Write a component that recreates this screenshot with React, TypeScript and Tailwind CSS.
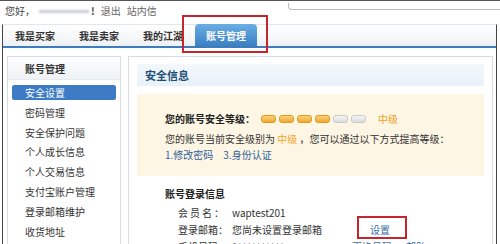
import React from 'react';

const sideItems = ['安全设置', '密码管理', '安全保护问题', '个人成长信息', '个人交易信息', '支付宝账户管理', '登录邮箱维护', '收货地址'];

const Pill = ({ on }: { on: boolean }) => (
    <span
        className={
            on
                ? 'inline-block w-[15px] h-[8px] rounded-[3px] border border-[#e09a1c] bg-gradient-to-b from-[#fbd27a] to-[#f0a72a]'
                : 'inline-block w-[15px] h-[8px] rounded-[3px] border border-[#c9c9c9] bg-gradient-to-b from-[#f6f6f6] to-[#dcdcdc]'
        }
    />
);

const App: React.FC = () => {
    return (
        <div className="relative w-[500px] h-[244px] overflow-hidden bg-white text-[#333] font-['Noto_Sans_CJK_SC',sans-serif] border-t border-[#555]">
            {/* greeting row */}
            <div className="h-[23px] flex items-start">
                <div className="shrink-0 whitespace-nowrap flex items-center gap-[4px] pl-[5px] pt-[3px] text-[10px] leading-[14px] text-[#444]">
                    <span>您好，</span>
                    <span className="inline-block w-[50px] h-[3px] bg-[#c8ccd2] blur-[1px]" />
                    <span className="font-bold -ml-[2px]">!</span>
                    <span className="ml-[2px] text-[#666]">退出</span>
                    <span className="ml-[2px] text-[#666]">站内信</span>
                </div>
                <div className="ml-[131px] mt-[2px] w-[222px] h-[7px] shrink-0 border-l border-b border-[#bbb] rounded-bl-[4px]" />
            </div>

            {/* frame */}
            <div className="ml-[2px] w-[495px] h-[221px] border-l border-r border-[#444] border-t border-t-[#e3e6ea]">
                {/* tabs */}
                <div className="h-[21px] flex items-end pl-[12px] bg-gradient-to-b from-white to-[#eef1f4]">
                    <div className="h-full flex items-center whitespace-nowrap text-[10px] font-bold text-[#333] gap-[24px]">
                        <span>我是买家</span>
                        <span>我是卖家</span>
                        <span>我的江湖</span>
                    </div>
                    <div className="ml-[12px] w-[62px] h-[22px] rounded-t-[4px] bg-gradient-to-b from-[#6aaee2] to-[#3a80c4] flex items-center justify-center text-[10px] font-bold text-white">
                        账号管理
                    </div>
                </div>
                <div className="h-[2px] bg-[#3d7dbd]" />

                {/* body */}
                <div className="flex gap-[7px] pt-[8px] pl-[4px]">
                    {/* sidebar */}
                    <div className="w-[114px] h-[200px] border border-[#d6dce2]">
                        <div className="h-[23px] flex items-center pl-[17px] text-[10px] font-bold text-[#333] bg-gradient-to-b from-white to-[#eef2f5] border-b border-[#e6eaee]">
                            账号管理
                        </div>
                        <div className="pt-[5px] px-[4px] flex flex-col">
                            {sideItems.map((t, i) => (
                                <div
                                    key={t}
                                    className={
                                        i === 0
                                            ? 'h-[15px] mb-[4.8px] flex items-center pl-[13px] text-[10px] text-white bg-[#3d7cc4] rounded-[2px]'
                                            : 'h-[15px] mb-[4.8px] flex items-center pl-[13px] text-[10px] text-[#333]'
                                    }
                                >
                                    {t}
                                </div>
                            ))}
                        </div>
                    </div>

                    {/* main */}
                    <div className="w-[365px] h-[200px] border border-[#d6dce2] px-[8px] pt-[7px]">
                        <div className="h-[22px] flex items-center pl-[8px] text-[11px] font-semibold text-[#1d4f76] bg-gradient-to-b from-[#f4f8fc] to-[#e9f1f9]">
                            安全信息
                        </div>

                        <div className="mt-[8px] h-[82px] bg-[#fdf6e4] pl-[28px] pt-[18px] text-[10px] leading-[14px]">
                            <div className="flex items-center">
                                <span className="font-bold text-[#222]">您的账号安全等级：</span>
                                <div className="ml-[6px] flex gap-[3px]">
                                    <Pill on />
                                    <Pill on />
                                    <Pill on />
                                    <Pill on />
                                    <Pill on={false} />
                                    <Pill on={false} />
                                </div>
                                <span className="ml-[12px] text-[#f0a21e]">中级</span>
                            </div>
                            <div className="mt-[6px] text-[#333]">
                                您的账号当前安全级别为 <span className="text-[#f0a21e]">中级</span> ，您可以通过以下方式提高等级：
                            </div>
                            <div className="mt-[2px] flex gap-[10px] text-[#2f5f9a]">
                                <span>1.修改密码</span>
                                <span>3.身份认证</span>
                            </div>
                        </div>

                        <div className="pl-[28px] pt-[11px] text-[10px] leading-[14px]">
                            <div className="font-bold text-[#222]">账号登录信息</div>
                            <div className="mt-[5px] pl-[13px] flex flex-col gap-[3px] text-[#333]">
                                <div className="flex">
                                    <span className="w-[54px] tracking-[2px]">会员名：</span>
                                    <span>waptest201</span>
                                </div>
                                <div className="flex">
                                    <span className="w-[54px]">登录邮箱：</span>
                                    <span className="w-[138px]">您尚未设置登录邮箱</span>
                                    <span className="text-[#3a6ea8]">设置</span>
                                </div>
                                <div className="flex">
                                    <span className="w-[54px]">手机号码：</span>
                                    <span className="w-[120px] text-[#666]">1**********</span>
                                    <span className="text-[#3a6ea8]">更换号码</span>
                                    <span className="ml-[14px] text-[#3a6ea8]">帮助</span>
                                </div>
                            </div>
                        </div>
                    </div>
                </div>
            </div>

            {/* annotation boxes */}
            <div className="absolute left-[182px] top-[14px] w-[86px] h-[38px] border-2 border-[#c4262c]" />
            <div className="absolute left-[357px] top-[215px] w-[50px] h-[23px] border-2 border-[#c4262c]" />
        </div>
    );
};

export default App;
